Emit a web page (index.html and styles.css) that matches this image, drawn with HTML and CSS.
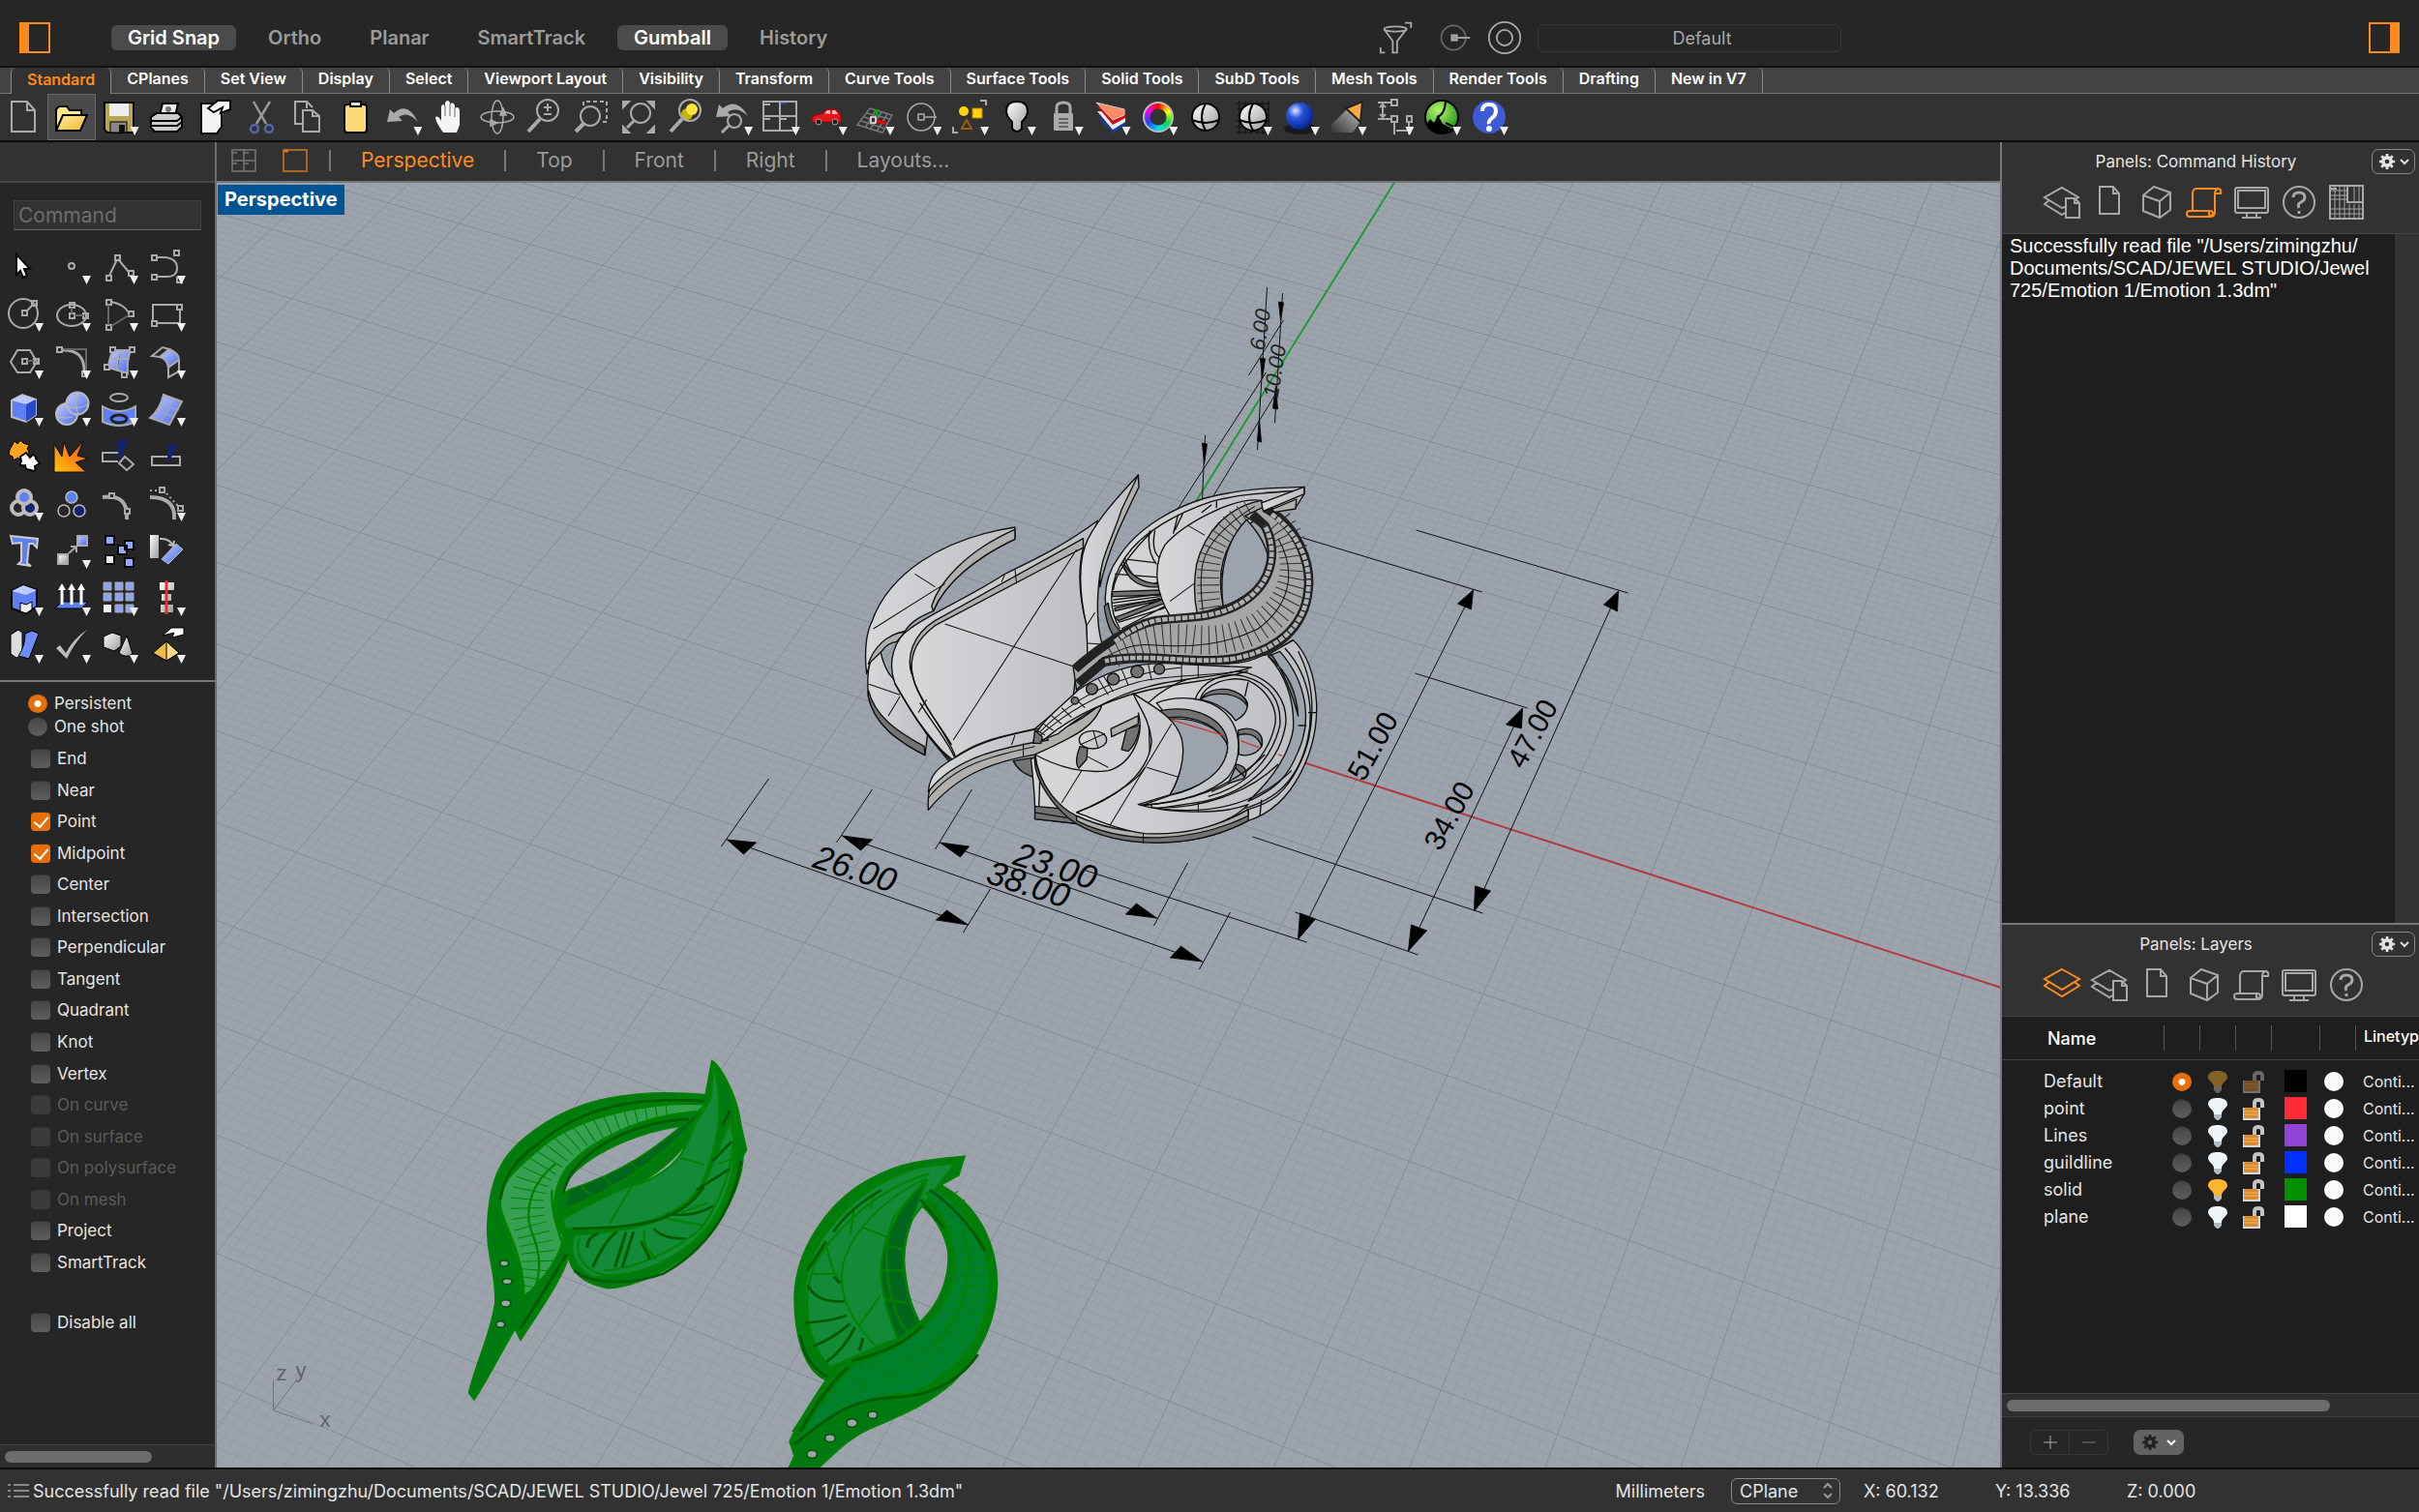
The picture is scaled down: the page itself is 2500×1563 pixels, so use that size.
FILE: index.html
```html
<!DOCTYPE html>
<html lang="en">

<head>
    <meta charset="UTF-8">
    <meta name="viewport" content="width=device-width, initial-scale=1.0">
    <title>Emotion 1.3dm</title>
    <link rel="stylesheet" href="styles.css">
</head>

<body>
    <!-- shared icons -->
    <svg class="defs" width="0" height="0">
        <defs>
            <linearGradient id="blue" x1="0" y1="0" x2="1" y2="1"><stop offset="0" stop-color="#c3d0ff"/><stop offset="1" stop-color="#4a66e8"/></linearGradient>
            <linearGradient id="grey" x1="0" y1="0" x2="1" y2="1"><stop offset="0" stop-color="#fff"/><stop offset="1" stop-color="#999"/></linearGradient>
            <linearGradient id="gold" x1="0" y1="0" x2="1" y2="1"><stop offset="0" stop-color="#fff2a8"/><stop offset="1" stop-color="#f0b429"/></linearGradient>
            <linearGradient id="fire" x1="0" y1="1" x2="1" y2="0"><stop offset="0" stop-color="#ffc20e"/><stop offset="1" stop-color="#f04e1a"/></linearGradient>
            <linearGradient id="beam" x1="1" y1="0" x2="0" y2="1"><stop offset="0" stop-color="#bbb"/><stop offset="1" stop-color="#333"/></linearGradient>
            <linearGradient id="metal" x1="0" y1="0" x2="1" y2="0"><stop offset="0" stop-color="#d6d7d9"/><stop offset="1" stop-color="#bdbec1"/></linearGradient>
            <radialGradient id="ball" cx=".35" cy=".3" r=".8"><stop offset="0" stop-color="#dfe8ff"/><stop offset=".35" stop-color="#2a54e0"/><stop offset="1" stop-color="#001a80"/></radialGradient>
            <radialGradient id="green" cx=".4" cy=".3" r=".8"><stop offset="0" stop-color="#b5f56a"/><stop offset="1" stop-color="#0f8a12"/></radialGradient>
        </defs>
        <symbol id="i-layers" viewBox="0 0 40 40"><path d="M20 4 38 14 20 25 2 14ZM7 17 2 21 20 32 38 21 33 17"/></symbol>
        <symbol id="i-layerdoc" viewBox="0 0 40 40"><path d="M23 25 20 26 2 15 20 5 37 15 34 17M7 18 2 22 20 33 23 31M24 16h9l5 5v15H24zM33 16v5h5"/></symbol>
        <symbol id="i-doc" viewBox="0 0 40 40"><path d="M10 4h14l6 7v21H10zM24 4v7h6"/></symbol>
        <symbol id="i-box" viewBox="0 0 40 40"><path d="M17 4 34 10V28L23 36 6 29V13ZM6 13 23 19 34 10M23 19V36"/></symbol>
        <symbol id="i-scroll" viewBox="0 0 40 40"><path d="M8 29V10Q9 6 12 6H35Q31 7 31 11V30Q31 35 26 35H5Q2 35 2 32T5 29H26Q29 29 29 32T25 33V30M35 6Q38 7 37 11H31M8 29V10"/></symbol>
        <symbol id="i-screen" viewBox="0 0 40 40"><path d="M5 5H35Q37 5 37 7V29Q37 31 35 31H5Q3 31 3 29V7Q3 5 5 5ZM6 8H34V26H6ZM15 31V35M25 31V35M10 36H30"/></symbol>
        <symbol id="i-ask" viewBox="0 0 40 40"><circle cx="20" cy="20" r="16"/><path stroke-width="3" d="M14 15Q14 10 20 10T26 15Q26 18 22 20T20 26M20 29V32"/></symbol>
        <symbol id="i-plane" viewBox="0 0 40 40"><path stroke-width="1" d="M8 3V37M13 3V37M18 3V37M23 22V37M28 22V37M33 22V37M3 8H20M3 13H20M3 17H20M3 27H37M3 32H37M28 3V20M33 3V20"/><path d="M3 3H37V37H3ZM21 3V20H37M3 6H10"/></symbol>
        <symbol id="i-gear" viewBox="0 0 20 20"><circle cx="10" cy="10" r="4.6" fill="none" stroke="currentColor" stroke-width="4"/><path stroke="currentColor" stroke-width="3" d="M10 1V5M10 15V19M1 10H5M15 10H19M3.6 3.6 6.4 6.4M13.6 13.6 16.4 16.4M3.6 16.4 6.4 13.6M13.6 6.4 16.4 3.6"/></symbol>
        <symbol id="i-bulb" viewBox="0 0 22 24"><path d="M11 1C5 1 1 3 1 8 2 12 7 13 7 18H15C15 13 20 12 21 8 21 3 17 1 11 1Z" fill="currentColor"/><path d="M7 18H15V21L12 24H10L7 21Z" fill="#b4bac2"/></symbol>
        <symbol id="i-lock" viewBox="0 0 24 24"><path d="M13 14V6Q13 3 17 3T21 6V11" fill="none" stroke="#c4c4c4" stroke-width="4"/><rect x="1" y="11" width="18" height="13" fill="#d8d8d8"/><rect x="2" y="11" width="15" height="11" rx="2" fill="#d98a2b"/><path d="M2 15H17M2 18H17" stroke="#f5b766"/></symbol>
        <symbol id="i-mag" viewBox="0 0 48 48"><circle cx="28" cy="17" r="11"/><path stroke-width="4" d="M20 26 8 39"/></symbol>
    </svg>

    <header class="topbar">
        <button class="side-toggle" aria-label="Toggle left sidebar"></button>
        <div class="modes">
            <button class="mode on">Grid Snap</button>
            <button class="mode">Ortho</button>
            <button class="mode">Planar</button>
            <button class="mode">SmartTrack</button>
            <button class="mode on">Gumball</button>
            <button class="mode">History</button>
        </div>
        <div class="top-right">
            <button class="top-icon" aria-label="Selection filter"><svg viewBox="0 0 40 40" class="line"><ellipse cx="19" cy="10" rx="13" ry="3"/><path d="M6 10 16 24V37H21V24L32 10M30 3H37V9M2 31V37H7"/></svg></button>
            <button class="top-icon dim" aria-label="Object snap"><svg viewBox="0 0 40 40" class="line"><circle cx="19" cy="20" r="14"/><path d="M19 20H38"/><rect x="17" y="17" width="6" height="6" fill="#999"/></svg></button>
            <button class="top-icon" aria-label="Record history"><svg viewBox="0 0 40 40" class="line"><circle cx="20" cy="20" r="18"/><circle cx="20" cy="20" r="9"/></svg></button>
            <input class="layer-field" aria-label="Current layer" value="Default">
        </div>
        <button class="side-toggle end" aria-label="Toggle right sidebar"></button>
    </header>

    <nav class="tabs">
        <button class="tab active">Standard</button>
        <button class="tab">CPlanes</button>
        <button class="tab">Set View</button>
        <button class="tab">Display</button>
        <button class="tab">Select</button>
        <button class="tab">Viewport Layout</button>
        <button class="tab">Visibility</button>
        <button class="tab">Transform</button>
        <button class="tab">Curve Tools</button>
        <button class="tab">Surface Tools</button>
        <button class="tab">Solid Tools</button>
        <button class="tab">SubD Tools</button>
        <button class="tab">Mesh Tools</button>
        <button class="tab">Render Tools</button>
        <button class="tab">Drafting</button>
        <button class="tab">New in V7</button>
    </nav>

    <div class="toolbar">
        <div class="tools">
            <button class="tool" aria-label="New"><svg viewBox="0 0 48 48" class="line"><path d="M12 8H28L36 17V39H12ZM28 8V17H36"/></svg></button>
            <button class="tool hover" aria-label="Open"><svg viewBox="0 0 48 48"><path d="M8 38V16L11 13H19L22 17H34V22" fill="#ffe98a" stroke="#000" stroke-width="2"/><path d="M8 38 15 22H40L33 38Z" fill="url(#gold)" stroke="#000" stroke-width="2"/></svg></button>
            <button class="tool drop" aria-label="Save"><svg viewBox="0 0 48 48"><path d="M9 9H39V40H12L9 37Z" fill="#b5a652" stroke="#000" stroke-width="2"/><rect x="14" y="10" width="20" height="13" fill="#eee"/><rect x="15" y="29" width="17" height="11" fill="#888" stroke="#000"/><rect x="24" y="32" width="6" height="8" fill="#111"/></svg></button>
            <button class="tool" aria-label="Print"><svg viewBox="0 0 48 48"><path d="M17 22 20 10H36L33 23" fill="#eee" stroke="#000" stroke-width="2"/><path d="M8 24 14 20H36L40 24V34L35 39H12L8 35Z" fill="#ccc" stroke="#000" stroke-width="2"/><path d="M9 28H35L40 24M9 33H35L40 29" stroke="#000" stroke-width="2" fill="none"/><circle cx="26" cy="16" r="3" fill="#777"/></svg></button>
            <button class="tool" aria-label="Properties"><svg viewBox="0 0 48 48"><path d="M11 10H32V34L27 41H11Z" fill="#f4f4f4" stroke="#000" stroke-width="2"/><path d="M18 15 28 7H41V16L31 20 33 14 24 19Z" fill="#fff" stroke="#000" stroke-width="2"/></svg></button>
            <button class="tool" aria-label="Cut"><svg viewBox="0 0 48 48" fill="none" stroke-width="2.5"><path d="M16 8 29 31M33 8 19 31" stroke="#999"/><circle cx="17" cy="36" r="4" stroke="#5564a8"/><circle cx="32" cy="36" r="4" stroke="#5564a8"/></svg></button>
            <button class="tool" aria-label="Copy"><svg viewBox="0 0 48 48" class="line"><path d="M20 31H11V8H23L29 14M19 17H29L36 23V39H19ZM29 17V23H36M23 8V15"/></svg></button>
            <button class="tool" aria-label="Paste"><svg viewBox="0 0 48 48"><rect x="13" y="11" width="23" height="29" rx="3" fill="#ffd978" stroke="#000" stroke-width="2"/><path d="M19 13V8H30V13Z" fill="#ddd" stroke="#000" stroke-width="2"/></svg></button>
            <button class="tool drop" aria-label="Undo"><svg viewBox="0 0 48 48"><path d="M8 29 11 16 15 20Q29 7 40 29Q29 17 20 24L24 28Z" fill="#aaa"/></svg></button>
            <button class="tool" aria-label="Pan"><svg viewBox="0 0 48 48"><path d="M17 40C13 34 9 28 9 24Q12 22 15 28V13Q17 9 19 13V9Q22 5 24 9V11Q27 7 29 12V15Q33 12 34 17V32L31 40Z" fill="#f4f4f4"/><path d="M19 12V23M24 10V23M29 14V24" stroke="#999" stroke-width="1.5"/></svg></button>
            <button class="tool" aria-label="Rotate view"><svg viewBox="0 0 48 48" class="line thin"><ellipse cx="24" cy="24" rx="17" ry="6"/><ellipse cx="24" cy="24" rx="6" ry="17"/><path fill="#aaa" d="M30 15 33 22H27ZM17 27 24 30 17 33Z"/></svg></button>
            <button class="tool" aria-label="Zoom dynamic"><svg viewBox="0 0 48 48" class="line"><use href="#i-mag"/><path d="M28 10V18M24 14H32M24 21H32"/></svg></button>
            <button class="tool" aria-label="Zoom window"><svg viewBox="0 0 48 48" class="line"><circle cx="23" cy="23" r="10"/><path stroke-width="4" d="M16 31 8 39"/><path stroke-dasharray="4 3" d="M16 12V8H40V29H34"/></svg></button>
            <button class="tool" aria-label="Zoom extents"><svg viewBox="0 0 48 48" class="line"><circle cx="26" cy="20" r="10"/><path stroke-width="3" d="M19 28 12 35"/><path fill="#aaa" d="M8 8H14L8 14ZM40 8V14L34 8ZM8 40V34L14 40ZM40 40H34L40 34Z"/></svg></button>
            <button class="tool" aria-label="Zoom selected"><svg viewBox="0 0 48 48" class="line"><circle cx="25" cy="21" r="6" stroke="none" fill="#c8b400"/><circle cx="30" cy="16" r="6" stroke="none" fill="#ffe33a"/><use href="#i-mag"/></svg></button>
            <button class="tool drop" aria-label="Undo view change"><svg viewBox="0 0 48 48" class="line"><path fill="#aaa" stroke="none" d="M6 24 9 11 13 15Q27 3 39 23Q27 12 18 19L22 23Z"/><circle cx="25" cy="28" r="7"/><path stroke-width="3" d="M19 33 12 40"/></svg></button>
            <button class="tool drop" aria-label="Four viewports"><svg viewBox="0 0 48 48" class="line"><path d="M7 8H41V38H7ZM24 8V38M7 23H41M7 11H14M7 26H14M24 26H31"/><path stroke="#2b3fa0" d="M25 10H32"/></svg></button>
            <button class="tool drop" aria-label="Named view"><svg viewBox="0 0 48 48"><path d="M8 29Q7 23 12 22L20 20 23 16H33L38 22V29Z" fill="#e8141c" stroke="#900"/><path d="M21 20 24 17H27V21ZM29 17H32L35 21H29Z" fill="#fbb"/><circle cx="15" cy="29" r="3" fill="#222" stroke="#999"/><circle cx="32" cy="29" r="3" fill="#222" stroke="#999"/></svg></button>
            <button class="tool drop" aria-label="Set CPlane"><svg viewBox="0 0 48 48" class="line thin"><path stroke="#777" d="M19 15 42 22 32 40 6 32ZM16 20 40 26M13 24 37 31M10 28 35 36M25 17 14 35M31 19 19 37M37 21 26 39"/><path stroke="#0a0" stroke-width="3" d="M26 16V23"/><path stroke="#e00" stroke-width="3" d="M26 28 36 31"/><path stroke="#eee" fill="#323232" d="M20 24h5v6h-5z"/></svg></button>
            <button class="tool drop" aria-label="Object snap"><svg viewBox="0 0 48 48" class="line thin"><circle cx="23" cy="24" r="14"/><rect x="20" y="21" width="6" height="6"/><path d="M26 24H39"/></svg></button>
            <button class="tool drop" aria-label="Select"><svg viewBox="0 0 48 48"><circle cx="18" cy="18" r="5" fill="#ffd60a"/><rect x="27" y="15" width="10" height="10" fill="#ffd60a" stroke="#c70"/><path d="M16 36 21 27 26 36Z" fill="none" stroke="#a05a10" stroke-width="2"/><path d="M35 7H41V12M7 34V40H12" stroke="#aaa" stroke-width="2" fill="none"/></svg></button>
            <button class="tool drop" aria-label="Hide"><svg viewBox="0 0 48 48"><path d="M24 8Q13 8 13 18 13 23 19 29V36Q24 42 29 36V29Q35 23 35 18 35 8 24 8Z" fill="url(#grey)" stroke="#000" stroke-width="2"/></svg></button>
            <button class="tool drop" aria-label="Lock"><svg viewBox="0 0 48 48"><path d="M17 21V14Q17 9 24 9T31 14V21" fill="none" stroke="#aaa" stroke-width="3"/><rect x="14" y="20" width="20" height="18" rx="1" fill="#aaa"/><path d="M19 26H29M19 30H29M19 34H29" stroke="#666" stroke-width="2"/></svg></button>
            <button class="tool drop" aria-label="Layers"><svg viewBox="0 0 48 48"><path d="M10 24 27 41 39 32V24Z" fill="#1a3a9c"/><path d="M10 18 26 37 39 29V20Z" fill="#eee"/><path d="M10 13 26 32 39 25V17Z" fill="#c11"/><path d="M9 9 38 16V22L26 27Z" fill="#ff8a65" stroke="#ccc"/></svg></button>
            <button class="tool drop" aria-label="Color"><div class="wheel"></div></button>
            <button class="tool" aria-label="Shade"><svg viewBox="0 0 48 48"><circle cx="24" cy="24" r="14" fill="url(#grey)" stroke="#000" stroke-width="2"/><path d="M24 10Q16 24 24 38M10 27Q24 33 38 27" fill="none" stroke="#000" stroke-width="2"/></svg></button>
            <button class="tool drop" aria-label="Render mesh"><svg viewBox="0 0 48 48"><path d="M7 10H41M7 16H41M7 22H41M7 28H41M7 34H41M7 40H41M10 7V42M16 7V42M22 7V42M28 7V42M34 7V42M40 7V42" stroke="#111"/><circle cx="24" cy="24" r="14" fill="url(#grey)" stroke="#000" stroke-width="2"/><path d="M24 10Q16 24 24 38M10 27Q24 33 38 27" fill="none" stroke="#000" stroke-width="2"/></svg></button>
            <button class="tool drop" aria-label="Render"><svg viewBox="0 0 48 48"><ellipse cx="25" cy="36" rx="17" ry="6" fill="#1a1a1a"/><circle cx="24" cy="23" r="14" fill="url(#ball)"/></svg></button>
            <button class="tool drop" aria-label="Spotlight"><svg viewBox="0 0 48 48"><path d="M25 15 37 30 30 40H8V32Z" fill="url(#beam)"/><path d="M23 15 40 8 38 29Z" fill="#ffa63d" stroke="#222" stroke-width="2"/></svg></button>
            <button class="tool drop" aria-label="Dimension"><svg viewBox="0 0 48 48" class="line"><path d="M7 9H20M7 26H20M12 12V23M9 14 12 11 15 14M9 21 12 24 15 21M24 32V42M39 32V42M26 38H38"/><path d="M21 6H27V12H21ZM21 23H27V29H21ZM37 23H42V29H37ZM24 29V32M39 29V32"/></svg></button>
            <button class="tool drop" aria-label="Grasshopper"><svg viewBox="0 0 48 48"><circle cx="24" cy="24" r="17" fill="url(#green)" stroke="#000" stroke-width="2"/><path d="M8 32 12 26 16 30 20 22 25 31 33 35 36 39Q20 44 10 36Z" fill="#000"/><path d="M19 24Q27 22 28 8M28 30 38 35" stroke="#000" stroke-width="2" fill="none"/></svg></button>
            <button class="tool drop" aria-label="Help"><svg viewBox="0 0 48 48"><circle cx="24" cy="24" r="17" fill="#3d5bd6"/><path d="M17 18Q17 11 24 11T31 18Q31 22 27 25T24 31" fill="none" stroke="#fff" stroke-width="4"/><circle cx="24" cy="36" r="3" fill="#fff"/></svg></button>
        </div>
    </div>

    <main class="work">
        <aside class="left">
            <div class="strip"></div>
            <input class="command" aria-label="Command" placeholder="Command">
            <div class="palette">
                <button class="tool" aria-label="Cancel"><svg viewBox="0 0 48 48"><path d="M16 12V33L20 29 23 36 27 34 24 27H30Z" fill="#fff" stroke="#000" stroke-width="2"/></svg></button>
                <button class="tool drop" aria-label="Point"><svg viewBox="0 0 48 48" class="line"><circle cx="24" cy="24" r="3"/></svg></button>
                <button class="tool drop" aria-label="Polyline"><svg viewBox="0 0 48 48" class="line"><path d="M14 34 22 17M23 17 34 30"/><path d="M20 13h5v5h-5zM11 34h5v5h-5zM34 29h5v5h-5z"/></svg></button>
                <button class="tool drop" aria-label="Curve"><svg viewBox="0 0 48 48" class="line"><path d="M14 15H22Q35 16 35 26T22 35H14"/><path d="M9 13h5v5H9zM9 33h5v5H9zM32 8h5v5h-5zM35 36h5v5h-5z"/></svg></button>
                <button class="tool drop" aria-label="Circle"><svg viewBox="0 0 48 48" class="line"><circle cx="23" cy="24" r="15"/><path d="M26 22 32 16M22 21h5v5h-5zM32 11h5v5h-5z"/></svg></button>
                <button class="tool drop" aria-label="Ellipse"><svg viewBox="0 0 48 48" class="line"><ellipse cx="24" cy="26" rx="15" ry="11"/><path d="M22 24h5v5h-5zM22 13h5v5h-5zM36 24h5v5h-5z"/><path class="faint" d="M24 18V24M27 26H36"/></svg></button>
                <button class="tool drop" aria-label="Arc"><svg viewBox="0 0 48 48" class="line"><path d="M16 12Q28 14 34 23M11 10h5v5h-5zM11 36h5v5h-5zM34 22h5v5h-5z"/><path class="faint" d="M13 15V36M16 37 34 26"/></svg></button>
                <button class="tool drop" aria-label="Rectangle"><svg viewBox="0 0 48 48" class="line"><path d="M10 31V15H36M38 20V34H14M9 32h5v5H9zM35 15h5v5h-5z"/></svg></button>
                <button class="tool drop" aria-label="Polygon"><svg viewBox="0 0 48 48" class="line"><path d="M17 13H30L37 25 30 36H17L10 25ZM22 22h5v5h-5zM34 22h5v5h-5z"/><path class="faint" d="M27 24H34"/></svg></button>
                <button class="tool drop" aria-label="Fillet"><svg viewBox="0 0 48 48" class="line"><path stroke-width="3" d="M14 13Q38 12 37 36"/><path d="M9 10h5v5H9zM35 35h5v5h-5z"/><path class="faint" d="M16 12H39V35"/></svg></button>
                <button class="tool drop" aria-label="Surface from points"><svg viewBox="0 0 48 48" class="line"><path fill="url(#blue)" d="M18 13H36Q32 24 33 37L13 31Q14 20 18 13ZM26 13Q21 24 22 34M16 22H34"/><path fill="#262626" d="M15 10h5v5h-5zM35 10h5v5h-5zM9 28h5v5H9zM27 36h5v5h-5z"/></svg></button>
                <button class="tool drop" aria-label="Loft"><svg viewBox="0 0 48 48" class="line"><path d="M9 19 20 10 27 12 17 20Z"/><path fill="url(#blue)" d="M27 12Q37 16 37 23L26 31Q25 22 17 20Z"/><path d="M37 23V35L26 41V31"/></svg></button>
                <button class="tool drop" aria-label="Box"><svg viewBox="0 0 48 48"><path d="M11 16 22 10 36 15V31L26 38 11 33Z" fill="#5f80f5" stroke="#bbb" stroke-width="2"/><path d="M11 16 22 10 36 15 26 20Z" fill="#bccaff"/><path d="M26 20 36 15V31L26 38Z" fill="#2b48c8"/></svg></button>
                <button class="tool drop" aria-label="Spheres"><svg viewBox="0 0 48 48" stroke="#bbb" stroke-width="2"><circle cx="19" cy="30" r="11" fill="url(#blue)"/><circle cx="30" cy="19" r="11.5" fill="url(#blue)"/><path fill="none" stroke-width="1" d="M19 22Q30 26 41 20M30 8Q26 20 31 30M10 33Q18 35 25 33"/></svg></button>
                <button class="tool drop" aria-label="Project curve"><svg viewBox="0 0 48 48" class="line"><ellipse cx="24" cy="13" rx="9" ry="4"/><path fill="#5f80f5" d="M7 22Q24 32 41 22V38Q24 46 7 38Z"/><ellipse cx="24" cy="35" rx="8" ry="4" stroke="#222" stroke-width="3"/></svg></button>
                <button class="tool drop" aria-label="Mesh"><svg viewBox="0 0 48 48" class="line"><path fill="url(#blue)" d="M21 10 40 17Q34 28 27 41L7 34Q17 26 21 10Z"/><path stroke-width="1" d="M30 14Q27 28 17 38M17 20 37 26M13 27 33 33"/></svg></button>
                <button class="tool" aria-label="Join"><svg viewBox="0 0 48 48" stroke="#000"><path d="M9 18 14 9 17 12Q20 6 23 11L29 13 27 17Q31 22 26 22L23 30 17 26Q13 31 12 25L8 23Z" fill="#ffa51e"/><path stroke-width="2" d="M20 25 26 21 30 26Q35 20 36 27L40 32 35 35Q37 42 31 39L26 38 25 34Q17 35 21 30Z" fill="#fff"/></svg></button>
                <button class="tool" aria-label="Explode"><svg viewBox="0 0 48 48"><path d="M6 41V12L14 25 16 10 22 25 36 9 30 24 41 27 28 31 39 41Z" fill="url(#fire)" stroke="#111"/></svg></button>
                <button class="tool" aria-label="Trim"><svg viewBox="0 0 48 48" class="line"><path d="M23 30H7V21H23M24 32 30 25 39 33 32 39Z"/><path fill="#14246e" stroke="none" d="M23 8H34L23 31Z"/></svg></button>
                <button class="tool" aria-label="Split"><svg viewBox="0 0 48 48" class="line"><path d="M9 25H38V34H9Z"/><path fill="#14246e" stroke="none" d="M25 12H36L25 34Z"/></svg></button>
                <button class="tool drop" aria-label="Group"><svg viewBox="0 0 48 48" stroke="#bbb" stroke-width="4"><circle cx="18" cy="29" r="7" fill="#262626"/><circle cx="30" cy="29" r="7" fill="#14246e"/><circle cx="24" cy="18" r="7" fill="#5f80f5"/></svg></button>
                <button class="tool" aria-label="Ungroup"><svg viewBox="0 0 48 48" stroke="#bbb" stroke-width="1.5"><circle cx="16" cy="32" r="6" fill="#262626"/><circle cx="32" cy="32" r="6" fill="#14246e"/><circle cx="24" cy="18" r="6" fill="#5f80f5"/></svg></button>
                <button class="tool" aria-label="Edit points"><svg viewBox="0 0 48 48" class="line"><path stroke-width="4" d="M7 18Q34 14 32 41"/><path fill="#262626" d="M14 14h5v5h-5zM30 30h5v5h-5z"/></svg></button>
                <button class="tool drop" aria-label="Control points"><svg viewBox="0 0 48 48" class="line"><path stroke-width="4" d="M7 18Q34 18 32 41"/><path stroke-dasharray="2 3" d="M7 11H18M24 14 36 27"/><path fill="#262626" d="M17 8h5v5h-5zM36 27h5v5h-5z"/></svg></button>
                <button class="tool" aria-label="Text object"><svg viewBox="0 0 48 48"><path d="M10 9 38 12 37 21 33 17H29L27 37 31 40 18 38 21 35V16L12 17Z" fill="#5f80f5" stroke="#ccc" stroke-width="2"/></svg></button>
                <button class="tool drop" aria-label="Move"><svg viewBox="0 0 48 48" class="line"><path fill="url(#grey)" d="M10 28h10v10H10z"/><path fill="url(#blue)" d="M30 9h10v10H30z"/><path d="M21 27 29 20M23 20H29V26"/></svg></button>
                <button class="tool" aria-label="Copy object"><svg viewBox="0 0 48 48" stroke="#000" stroke-width="2"><path fill="#90a8ff" d="M10 9h9v9h-9zM30 14h9v9h-9zM23 19h9v9h-9zM30 32h9v9h-9z"/><path fill="#eee" d="M10 29h9v9h-9z"/></svg></button>
                <button class="tool" aria-label="Rotate"><svg viewBox="0 0 48 48"><path d="M7 8H16V32H7Z" fill="url(#grey)"/><path d="M19 33 34 17 41 23 26 38Z" fill="url(#blue)" stroke="#bbb"/><path d="M17 12Q27 11 31 19M26 18 31 19 32 14" fill="none" stroke="#bbb" stroke-width="2"/></svg></button>
                <button class="tool drop" aria-label="Boolean"><svg viewBox="0 0 48 48"><path d="M11 17 23 11 37 16V33L26 40 11 35Z" fill="#5f80f5" stroke="#000" stroke-width="2"/><path d="M11 17 23 11 37 16 26 21Z" fill="#bccaff"/><path d="M20 29 26 31 32 28V36L26 40 20 38Z" fill="#eee" stroke="#000"/></svg></button>
                <button class="tool drop" aria-label="Extrude"><svg viewBox="0 0 48 48"><path d="M7 35 14 28H41L34 35Z" fill="#5f80f5" stroke="#000"/><path d="M14 31V14M24 31V14M34 31V14" stroke="#fff" stroke-width="3"/><path d="M10 16 14 9 18 16ZM20 16 24 9 28 16ZM30 16 34 9 38 16Z" fill="#fff"/></svg></button>
                <button class="tool drop" aria-label="Array"><svg viewBox="0 0 48 48"><path d="M8 8h8v8H8zM20 8h8v8h-8zM31 8h8v8h-8zM8 19h8v8H8zM20 19h8v8h-8zM31 19h8v8h-8zM20 31h8v8h-8zM31 31h8v8h-8z" fill="#8da2f0" stroke="#aaa"/><path d="M8 31h8v8H8z" fill="#eee"/></svg></button>
                <button class="tool drop" aria-label="Align"><svg viewBox="0 0 48 48"><path d="M17 8H32V16H17ZM19 20H29V27H19ZM18 31H31V39H18Z" fill="url(#grey)"/><path d="M24 6V41" stroke="#d33" stroke-width="3"/></svg></button>
                <button class="tool drop" aria-label="Analyze"><svg viewBox="0 0 48 48" stroke="#000"><path d="M10 13 18 8 22 11V34L16 37 10 33Z" fill="#ddd"/><path d="M25 12 32 9 39 12 29 38 18 35Q25 25 25 12Z" fill="#6f8cf8"/></svg></button>
                <button class="tool drop" aria-label="Check"><svg viewBox="0 0 48 48"><path d="M8 27 12 24 18 32Q26 17 40 8Q27 21 19 38Z" fill="#bbb"/></svg></button>
                <button class="tool drop" aria-label="Primitives"><svg viewBox="0 0 48 48" stroke="#000"><path d="M8 15 17 11 26 14V25L19 30 8 26Z" fill="url(#grey)"/><path d="M32 14 38 33Q31 38 24 32Z" fill="url(#grey)"/></svg></button>
                <button class="tool drop" aria-label="Drape"><svg viewBox="0 0 48 48" stroke="#000"><path d="M24 20 37 32 24 40 10 32Z" fill="#e8bb4d"/><path d="M24 20 24 40 37 32Z" fill="#f8d985"/><path d="M20 14 29 6H42V13L30 16 32 11Z" fill="#fff"/></svg></button>
            </div>

            <form class="osnap">
                <div class="persist">
                    <label><input type="radio" name="osnap" checked>Persistent</label>
                    <label><input type="radio" name="osnap">One shot</label>
                </div>
                <div class="snaps">
                    <label><input type="checkbox">End</label>
                    <label><input type="checkbox">Near</label>
                    <label><input type="checkbox" checked>Point</label>
                    <label><input type="checkbox" checked>Midpoint</label>
                    <label><input type="checkbox">Center</label>
                    <label><input type="checkbox">Intersection</label>
                    <label><input type="checkbox">Perpendicular</label>
                    <label><input type="checkbox">Tangent</label>
                    <label><input type="checkbox">Quadrant</label>
                    <label><input type="checkbox">Knot</label>
                    <label><input type="checkbox">Vertex</label>
                    <label class="off"><input type="checkbox" disabled>On curve</label>
                    <label class="off"><input type="checkbox" disabled>On surface</label>
                    <label class="off"><input type="checkbox" disabled>On polysurface</label>
                    <label class="off"><input type="checkbox" disabled>On mesh</label>
                    <label><input type="checkbox">Project</label>
                    <label><input type="checkbox">SmartTrack</label>
                </div>
                <label class="disable"><input type="checkbox">Disable all</label>
            </form>
            <div class="scroll"><div class="thumb"></div></div>
        </aside>

        <section class="center">
            <nav class="views">
                <button class="view-icon" aria-label="Four views"><svg viewBox="0 0 26 24" class="line thin"><path d="M1 1H25V23H1ZM13 1V23M1 12H25M1 4H6M13 4H18M1 15H6M13 15H18"/></svg></button>
                <button class="view-icon single" aria-label="Single view"><svg viewBox="0 0 26 24" class="line thin"><path d="M1 1H25V23H1Z"/><path stroke-width="3" d="M1 2H6"/></svg></button>
                <button class="view active">Perspective</button>
                <button class="view">Top</button>
                <button class="view">Front</button>
                <button class="view">Right</button>
                <button class="view">Layouts...</button>
            </nav>
            <div class="stage">
                <svg class="scene" viewBox="224 189 1844 1328" preserveAspectRatio="xMidYMid slice">
                    <path id="minor" class="minor"/>
                    <path id="major" class="major"/>
                    <path id="axisX" class="axis-x"/>
                    <path id="axisY" class="axis-y"/>

                    <!-- dimensions -->
                    <g class="dims">
                        <path d="M795 805 746 875M752 868 1001 956M1024 919 996 964M902 816 865 871M871 864 1243 994M1272 943 1240 1002M1005 816 967 878M972 871 1196 949M1228 892 1193 957M1120 899 1351 974M1339 943 1466 987M1342 971 1523 610M1347 556 1532 612M1524 942 1673 611M1464 548 1683 613M1295 865 1533 944M1456 983 1574 732M1463 696 1579 732M1310 297 1300 465M1326 303 1318 437M1246 450 1243 516M1327 331 1291 388M1309 385 1215 530M1322 402 1250 520"/>
                        <path class="tip" d="M752 868 782 871 769 883ZM1001 956 979 941 968 951ZM871 864 902 868 890 879ZM1243 994 1221 978 1210 990ZM972 871 1002 875 993 886ZM1196 949 1175 934 1164 945ZM1342 971 1344 944 1360 950ZM1523 610 1507 624 1521 630ZM1673 611 1658 625 1672 632ZM1524 942 1525 916 1541 921ZM1574 732 1557 749 1573 753ZM1456 983 1459 956 1475 962ZM1324 331 1322 312 1327 313ZM1305 392 1303 370 1308 371ZM1302 434 1300 456 1304 457ZM1319 399 1316 422 1321 423ZM1245 480 1243 458 1248 459Z"/>
                        <text class="slant" transform="translate(839 896) rotate(18)">26.00</text>
                        <text class="slant" transform="translate(1046 893) rotate(18)">23.00</text>
                        <text class="slant" transform="translate(1018 912) rotate(18)">38.00</text>
                        <text transform="translate(1410 809) rotate(-61)">51.00</text>
                        <text transform="translate(1489 881) rotate(-61)">34.00</text>
                        <text transform="translate(1575 796) rotate(-61)">47.00</text>
                        <text class="small" transform="translate(1307 363) rotate(-81)">6.00</text>
                        <text class="small" transform="translate(1321 412) rotate(-81)">10.00</text>
                    </g>

                    <!-- pendant -->
                    <g class="metal" transform="translate(860 460) scale(.3444 .3333)">
                        <path d="M105 710C95 620 110 570 120 550C170 400 330 290 550 255L550 292C430 350 340 430 305 515C270 530 240 545 220 577C170 585 130 620 105 710Z"/>
                        <path class="side" d="M550 262L550 292C430 350 340 430 305 515L300 500C320 430 400 330 550 262Z"/>
                        <path d="M145 632C110 660 105 700 110 780C125 860 190 915 280 962L290 880C250 830 210 780 185 725C160 700 150 660 145 632Z"/>
                        <path class="dark" d="M110 760C130 840 190 885 278 935L280 962C190 915 125 860 110 780Z"/>
                        <path class="side" d="M110 680C125 630 165 585 220 580L195 610C175 612 160 625 150 640Z"/>
                        <path class="dark" d="M280 890 300 900 372 968 355 985Z"/>
                        <path d="M362 975C290 920 240 830 190 740C165 670 190 600 235 570C300 520 400 480 520 400C620 350 700 310 798 235L770 330 735 690 610 880Z"/>
                        <path d="M372 968C350 900 280 820 250 740C225 660 240 600 310 555L755 318C735 400 745 480 765 560L770 655L735 690L725 780L610 880C520 900 430 920 372 968Z"/>
                        <path class="side" d="M755 290L310 545C240 590 225 660 240 710C235 640 260 600 310 560L755 318Z"/>
                        <path d="M920 93C850 170 800 230 770 290C735 360 745 470 765 560L768 655L812 620C795 560 795 480 805 400C830 320 880 220 920 130Z"/>
                        <path class="side" d="M920 93L922 130C880 220 830 320 805 440C800 360 840 300 870 200Z"/>
                        <path class="line" d="M190 740C240 830 270 880 362 985M265 800C300 860 350 920 368 968M240 700C250 780 320 860 360 930"/>
                        <path class="thin" d="M340 555 735 690M735 325 365 915M250 400 310 440M340 430 125 570M112 742 205 775M205 780 170 840M285 790 260 830M765 560 790 520M768 615 812 618M520 400 510 425M550 385 555 430"/>

                        <!-- lower disc -->
                        <path class="dark" d="M545 980C560 1010 580 1020 605 1030L600 970Z"/>
                        <path d="M598 975C605 1040 612 1100 610 1160L735 1175 720 1100 620 960Z"/>
                        <path class="dark" d="M610 1120 690 1128 735 1150 745 1175 610 1160Z"/>
                        <path class="line" d="M610 1140 740 1162M625 1030 622 1120"/>
                        <path d="M610 955C620 1060 690 1130 735 1165C860 1250 1080 1260 1250 1165C1390 1120 1460 940 1455 800C1450 720 1430 650 1385 605L1310 650 1000 700 800 800Z"/>
                        <path class="dark" d="M610 960C620 1060 690 1130 735 1150C880 1220 1100 1225 1250 1130L1250 1165C1080 1260 860 1250 735 1175C680 1140 600 1040 610 960Z"/>
                        <path class="side" d="M735 1150C880 1220 1100 1225 1250 1130L1250 1150C1080 1235 880 1240 735 1165Z"/>
                        <path class="gap" d="M1345 640C1430 740 1440 860 1400 950C1370 1030 1330 1070 1250 1105C1330 1030 1375 950 1385 880C1390 790 1360 710 1310 655Z"/>
                        <path class="dark" d="M1310 655C1375 710 1395 770 1400 840C1385 780 1355 700 1320 650Z"/>
                        <path class="line" d="M1360 630C1440 720 1455 850 1415 960C1380 1060 1310 1120 1180 1140M1400 640C1460 760 1450 900 1400 1000C1360 1080 1320 1110 1250 1130M1385 605 1350 625M1400 870H1425M1430 830H1455M1290 1100 1285 1150"/>
                        <path d="M950 800C1020 730 1140 690 1240 705C1330 730 1370 800 1362 870C1340 1000 1230 1090 1090 1110L960 1130Z"/>
                        <path class="line" d="M1090 790C1110 730 1180 700 1240 718C1320 740 1350 800 1345 870C1320 980 1240 1060 1130 1090M1105 790C1120 740 1190 715 1250 730C1310 760 1340 820 1330 870C1310 960 1250 1030 1140 1075M1250 735 1240 780"/>
                        <path class="gap" d="M1110 790C1120 760 1230 750 1248 800C1250 830 1230 845 1212 855C1190 820 1160 800 1110 790ZM1220 890C1270 870 1300 900 1290 935C1270 965 1240 965 1222 960ZM1212 1000C1240 1000 1250 1020 1235 1035L1190 1050Z"/>
                        <path class="dark" d="M1110 785C1140 740 1240 750 1248 810C1220 765 1150 765 1110 785ZM1220 885C1260 870 1300 890 1290 935C1280 900 1250 890 1220 900ZM1212 990C1240 995 1250 1010 1240 1030L1215 1005Z"/>
                        <path d="M975 800C1040 775 1130 780 1180 830C1230 880 1235 970 1190 1030C1130 1090 1020 1110 930 1118L1020 1085C1100 1070 1180 1010 1188 940C1185 880 1100 835 1010 845Z"/>
                        <path class="gap" d="M1005 850C1100 840 1188 890 1188 940C1180 1020 1100 1065 1015 1085C1055 1020 1070 930 1005 850Z"/>
                        <path class="dark" d="M985 825C1080 800 1190 850 1188 930C1150 850 1050 835 1000 848Z"/>
                        <path class="red" d="M1012 850 1180 902M1228 918 1282 938M1340 960 1352 964"/>
                        <path class="line" d="M920 1118C1080 1110 1200 1060 1300 960M960 1125C1110 1130 1250 1080 1340 990M1000 1130C1150 1145 1280 1110 1380 1010"/>
                        <path class="thin" d="M750 1010 690 1110M1100 1110V1140M935 1205V1235"/>
                        <path d="M905 770C960 810 1030 840 1050 910C1065 970 1040 1040 1015 1085L920 1115C1000 1140 1160 1150 1250 1115C1180 1190 1040 1210 940 1205C860 1195 790 1160 735 1140C840 1100 950 1030 960 920C955 850 920 810 905 770Z"/>
                        <path class="line" d="M610 960C680 1000 760 1020 830 1010C900 990 940 900 920 830M735 1140C830 1100 920 1040 940 1000"/>
                        <ellipse cx="784" cy="914" rx="41" ry="28"/>
                        <path class="thin" d="M745 930 820 895M785 887 800 940"/>
                        <path class="dark" d="M745 935C735 960 730 990 742 1002L765 975 768 940ZM870 945 885 880 925 870C920 910 905 935 890 950Z"/>
                        <path class="side" d="M838 880 920 840V865L840 905Z"/>
                        <path class="thin" d="M1020 865 835 1180M945 1000 1040 1030M765 965 830 1000"/>
                        <path class="side" d="M290 1132C285 1040 310 1020 370 990C450 940 570 930 650 900C740 860 780 830 815 795C795 870 740 900 610 960C480 985 380 1020 290 1132Z"/>
                        <path d="M290 1075C295 1020 320 1000 370 970C450 915 530 900 620 880L650 915C500 940 370 970 290 1075Z"/>
                        <path class="thin" d="M290 1095C370 990 480 965 610 935M550 900 540 930M575 925V965"/>

                        <!-- upper ring -->
                        <path d="M850 590C810 520 810 420 860 350C920 250 1040 190 1120 165C1230 135 1330 132 1418 130L1418 152L1390 198L1300 200L1240 260L1100 540L870 580Z"/>
                        <path class="line" d="M865 570C825 500 835 420 880 350C930 270 1040 210 1140 175C1230 150 1320 148 1418 140M845 450C850 400 900 330 960 270M1140 185 1110 210M1155 175V195M1055 210 1030 265M1040 215 1025 275M955 265C945 320 960 350 975 370M970 265C960 320 970 340 985 350M880 350C890 400 930 440 980 440M870 370C900 430 940 450 980 425M890 355 970 365"/>
                        <path class="dark" d="M842 455 985 450V465L842 470ZM850 535 990 480 1000 490 860 545ZM850 515 985 482 985 476 850 505ZM818 500C825 550 835 580 850 595L870 580C845 560 835 530 830 490Z"/>
                        <path class="line" d="M842 490 985 470M845 500 985 478M870 570 1000 500M860 550 1000 505M850 400 975 410M845 480 990 462"/>
                        <path class="dark" d="M875 360C890 400 930 430 980 430V440C930 445 880 420 875 360Z"/>
                        <path d="M1290 172C1200 160 1050 250 1000 310C960 380 975 460 1015 530L1110 530C1080 440 1100 350 1140 270C1180 210 1250 190 1290 172Z"/>
                        <path class="shade" d="M1290 172C1190 190 1120 270 1095 370C1085 430 1088 480 1097 525L1175 500C1155 400 1170 320 1245 235L1295 195Z"/>
                        <path class="mesh narrow" d="M1255 205C1170 250 1130 330 1130 400C1128 450 1132 480 1138 515"/>
                        <path class="thin" d="M1070 250 1120 280M1015 485 1090 428M1270 190C1160 260 1110 330 1110 400C1105 450 1110 480 1115 520"/>
                        <path class="shade" d="M1300 190C1400 240 1450 350 1440 450C1430 580 1340 640 1250 670C1120 700 950 650 800 690L735 760 725 690C800 620 900 560 970 540C1060 520 1160 540 1240 480C1310 430 1340 350 1310 290C1290 240 1250 230 1240 220Z"/>
                        <path class="mesh" d="M1340 240C1410 320 1400 430 1350 500C1290 580 1200 610 1100 605C1000 590 900 610 830 655"/>
                        <path class="gap" d="M1245 232C1190 290 1160 380 1175 500C1260 470 1315 400 1312 360C1305 310 1280 270 1245 232Z"/>
                        <path class="rim" d="M730 695C800 630 900 560 970 545C1060 530 1160 545 1250 475C1320 420 1340 330 1300 250L1262 215"/>
                        <path class="ticks" d="M850 610C900 570 940 552 970 545C1060 530 1160 545 1250 475C1320 420 1340 330 1300 250"/>
                        <path class="rim" d="M1300 195C1400 250 1440 370 1430 450C1420 570 1330 630 1240 655C1120 690 950 640 820 670L740 740"/>
                        <path class="ticks" d="M1320 215C1400 270 1440 370 1430 450C1420 570 1330 630 1240 655C1120 690 950 640 820 670"/>
                        <path class="thin" d="M1340 290C1400 400 1370 500 1280 570C1180 620 1080 630 960 620C900 615 850 640 800 670"/>
                        <path d="M605 925C610 870 680 820 740 760C850 680 960 670 1050 680L1260 690C1180 720 1050 720 950 750C830 780 720 860 680 895Z"/>
                        <path class="thin" d="M610 915C700 830 800 770 920 735C1020 710 1120 720 1230 700M640 900 615 885M665 885 635 865M690 865 660 840M720 845 690 815M760 815 725 780M830 775 800 725M845 765 815 715M1050 735V680M1100 720V680M890 745 870 695M960 730 950 680M625 890C720 790 850 710 1050 690"/>
                        <path class="line" d="M630 920C720 840 850 775 1000 750C1100 730 1180 725 1250 700"/>
                        <g class="dark"><circle cx="730" cy="793" r="11"/><circle cx="781" cy="757" r="17"/><circle cx="845" cy="726" r="18"/><circle cx="917" cy="703" r="19"/><circle cx="983" cy="695" r="16"/></g>
                        <path class="dark" d="M605 925 610 885 632 905 628 925Z"/>
                        <path d="M1290 180 1418 130V152L1295 205Z"/>
                        <path class="side" d="M1320 200 1395 168 1392 198 1330 208Z"/>
                    </g>

                    <!-- ring parts on the solid layer -->
                    <g class="solid" transform="translate(460 1080) scale(.3827 .3333)">
                        <path class="deep" fill-rule="evenodd" d="M722 50C740 60 790 150 800 250L815 325 806 345C800 470 720 600 640 665C560 730 480 755 440 755C370 740 340 700 335 655C320 720 260 820 205 915L190 880C150 960 110 1050 80 1100L66 1080C80 1000 125 900 137 800C140 700 110 650 117 540C125 400 160 330 250 260C360 170 500 135 705 155ZM640 252C470 280 320 390 318 460C480 400 580 340 640 252ZM655 300C620 360 560 410 510 440C580 420 640 360 655 300Z"/>
                        <path class="pale" d="M700 185C560 175 370 220 270 310C190 390 150 420 150 500C160 560 215 650 215 780C270 730 320 640 320 590C280 540 290 450 330 380C420 280 540 215 700 205Z"/>
                        <path class="mesh" d="M600 200C480 210 350 250 275 360C215 430 215 520 235 570C260 650 260 700 240 770"/>
                        <path class="edge" d="M300 370C230 430 215 520 235 580C260 650 260 700 245 750"/>
                        <path class="edge" d="M700 165C520 160 340 200 240 300C160 370 140 440 150 520C165 580 215 650 205 850M670 225C500 240 370 300 315 410C290 470 300 540 325 590M330 600 330 650C310 730 260 810 205 890M700 178C520 170 340 220 250 320M130 500C120 580 160 640 185 660M290 450C285 520 310 580 315 610M125 630 175 620M135 660 185 650"/>
                        <path class="shadow" d="M335 450C470 400 570 330 700 190L660 265C560 380 450 450 320 520Z"/>
                        <path class="edge" d="M325 510C440 460 560 380 690 220M370 440 400 470M430 410 455 440M500 365 530 390"/>
                        <path d="M725 60C755 170 745 300 690 440C630 540 500 580 325 570L320 540C400 490 480 440 530 430C630 380 650 330 670 260L720 165Z"/>
                        <path d="M400 720C350 690 335 640 350 590C500 580 620 560 700 440L770 240C800 350 770 480 700 580C630 670 520 720 400 720Z"/>
                        <path class="edge" d="M735 80C810 180 800 360 760 480C700 620 560 720 430 715C370 700 350 640 365 600M780 200C790 350 760 450 700 560C630 640 500 700 430 700M635 350 700 372M505 440 445 555M540 575C530 620 560 650 570 665M640 520 710 490M740 370 785 350M600 540 700 560"/>
                        <path class="black" d="M775 300 725 360M770 385 680 450M770 205 750 250M725 500C680 530 640 530 600 525M650 600C610 605 580 590 565 570M555 665 530 610M400 690C420 640 440 600 465 580M385 630C385 600 400 590 415 585M480 690 510 580M350 700C400 750 520 740 590 710C700 640 780 520 800 360M460 690 490 580M150 480C160 400 200 350 250 310C370 190 520 160 700 175M205 880 330 650M320 460C350 330 500 240 660 230M345 570C520 570 640 550 700 440"/>
                        <g class="hole"><ellipse cx="161" cy="678" rx="12" ry="9"/><ellipse cx="169" cy="734" rx="13" ry="9"/><ellipse cx="165" cy="802" rx="14" ry="11"/><ellipse cx="151" cy="867" rx="12" ry="10"/></g>

                        <path class="deep" fill-rule="evenodd" d="M1404 346 1388 405 1340 435C1430 490 1490 600 1492 740C1490 850 1450 960 1370 1050C1300 1120 1230 1150 1150 1190C1090 1220 1060 1260 1010 1312L930 1312 945 1275 932 1230C960 1160 1000 1090 1030 1040C970 1010 945 900 945 780C950 620 1050 470 1160 410C1240 360 1320 355 1404 346ZM1283 495C1250 560 1235 640 1243 700C1250 780 1265 820 1283 862C1340 800 1365 720 1360 640C1350 580 1320 530 1283 495Z"/>
                        <path d="M1380 365C1230 370 1080 470 1000 640C950 770 970 900 1040 1000L1180 930 1250 560Z"/>
                        <path d="M1300 415C1180 480 1080 600 1072 710C1070 800 1110 870 1165 935L1230 910C1170 800 1170 650 1215 530Z"/>
                        <path class="shadow" d="M1303 418C1220 510 1180 600 1178 700C1180 780 1200 850 1225 915L1283 862C1240 780 1230 650 1250 580Z"/>
                        <path class="shade" d="M1300 460C1380 560 1390 680 1360 780C1300 900 1200 960 1110 990C1050 1050 1000 1140 955 1230C1080 1110 1180 1080 1260 1080C1380 1020 1460 920 1470 760C1480 640 1410 500 1330 450Z"/>
                        <path class="mesh" d="M1350 480C1440 600 1440 760 1390 880C1330 980 1200 1020 1110 1040L1040 1120"/>
                        <path class="edge" d="M1330 440C1430 500 1490 640 1478 770C1460 930 1370 1060 1250 1090C1100 1090 1020 1170 940 1250M1290 480C1360 560 1385 640 1370 740C1340 860 1230 950 1100 980C1040 1020 990 1120 940 1200M1380 370C1220 370 1090 460 1020 580C950 700 950 850 1000 960M1310 400C1180 440 1060 560 1000 680C970 760 970 860 1010 960M1125 565 1200 598M1175 780 1120 870M1160 460 1150 510M1105 510 1095 590M1030 620C1040 680 1060 730 1072 740M1200 580C1180 700 1210 840 1250 890M990 710H1065M1190 620 1235 635M1180 700H1240M1190 790 1250 800M1400 570C1440 700 1400 850 1320 930"/>
                        <path class="black" d="M980 745C1000 790 1040 800 1080 795M972 862C1020 860 1060 850 1085 840M995 935C1030 920 1060 900 1095 865M1030 985C1060 960 1090 920 1108 875M1120 950 1130 910M1310 450C1400 520 1450 620 1460 640M1050 720 1068 740M980 700 1030 610M1050 580C1080 530 1120 490 1180 450M945 1240C1080 1110 1120 1100 1250 1090C1330 1080 1400 1030 1440 960M1100 980C1200 950 1250 920 1290 870M960 1200C1000 1120 1040 1050 1090 1000M1285 480 1350 570M960 900C970 970 1000 1010 1035 1030"/>
                        <g class="hole"><ellipse cx="1156" cy="1148" rx="13" ry="11"/><ellipse cx="1100" cy="1173" rx="15" ry="13"/><ellipse cx="1041" cy="1220" rx="14" ry="12"/><ellipse cx="992" cy="1270" rx="14" ry="12"/></g>
                    </g>

                    <g class="gizmo">
                        <path d="M283 1427V1458L308 1425M283 1458 324 1472"/>
                        <text x="286" y="1427">z</text>
                        <text x="306" y="1424">y</text>
                        <text x="331" y="1475">x</text>
                    </g>
                </svg>
                <div class="tag">Perspective</div>
            </div>
        </section>

        <aside class="right">
            <section class="panel history">
                <div class="panel-head">
                    <h2>Panels: Command History</h2>
                    <button class="gear" aria-label="Panel options"><svg class="cog"><use href="#i-gear"/></svg><svg class="chev" viewBox="0 0 10 8"><path d="M1 2 5 6 9 2"/></svg></button>
                </div>
                <div class="panel-tabs">
                    <button aria-label="Layer states"><svg><use href="#i-layerdoc"/></svg></button>
                    <button aria-label="Notes"><svg><use href="#i-doc"/></svg></button>
                    <button aria-label="Properties"><svg><use href="#i-box"/></svg></button>
                    <button class="active" aria-label="Command history"><svg><use href="#i-scroll"/></svg></button>
                    <button aria-label="Display"><svg><use href="#i-screen"/></svg></button>
                    <button aria-label="Help"><svg><use href="#i-ask"/></svg></button>
                    <button aria-label="Construction planes"><svg><use href="#i-plane"/></svg></button>
                </div>
                <div class="log">
                    <p>Successfully read file "/Users/zimingzhu/<wbr>Documents/SCAD/JEWEL STUDIO/Jewel 725/Emotion 1/Emotion 1.3dm"</p>
                </div>
            </section>

            <section class="panel layers">
                <div class="panel-head">
                    <h2>Panels: Layers</h2>
                    <button class="gear" aria-label="Panel options"><svg class="cog"><use href="#i-gear"/></svg><svg class="chev" viewBox="0 0 10 8"><path d="M1 2 5 6 9 2"/></svg></button>
                </div>
                <div class="panel-tabs">
                    <button class="active" aria-label="Layers"><svg><use href="#i-layers"/></svg></button>
                    <button aria-label="Layer states"><svg><use href="#i-layerdoc"/></svg></button>
                    <button aria-label="Notes"><svg><use href="#i-doc"/></svg></button>
                    <button aria-label="Properties"><svg><use href="#i-box"/></svg></button>
                    <button aria-label="Command history"><svg><use href="#i-scroll"/></svg></button>
                    <button aria-label="Display"><svg><use href="#i-screen"/></svg></button>
                    <button aria-label="Help"><svg><use href="#i-ask"/></svg></button>
                </div>
                <div class="layer-list">
                    <table>
                        <colgroup><col class="c-name"><col class="c-s"><col class="c-s"><col class="c-s"><col class="c-m"><col class="c-s"><col></colgroup>
                        <thead>
                            <tr><th>Name</th><th></th><th></th><th></th><th></th><th></th><th>Linetype</th></tr>
                        </thead>
                        <tbody>
                            <tr class="current"><td>Default</td><td><input type="radio" name="layer" aria-label="Default" checked></td><td><svg class="bulb lit"><use href="#i-bulb"/></svg></td><td><svg class="lock"><use href="#i-lock"/></svg></td><td><span class="swatch black"></span></td><td><span class="dot"></span></td><td>Conti...</td></tr>
                            <tr><td>point</td><td><input type="radio" name="layer" aria-label="point"></td><td><svg class="bulb"><use href="#i-bulb"/></svg></td><td><svg class="lock"><use href="#i-lock"/></svg></td><td><span class="swatch red"></span></td><td><span class="dot"></span></td><td>Conti...</td></tr>
                            <tr><td>Lines</td><td><input type="radio" name="layer" aria-label="Lines"></td><td><svg class="bulb"><use href="#i-bulb"/></svg></td><td><svg class="lock"><use href="#i-lock"/></svg></td><td><span class="swatch purple"></span></td><td><span class="dot"></span></td><td>Conti...</td></tr>
                            <tr><td>guildline</td><td><input type="radio" name="layer" aria-label="guildline"></td><td><svg class="bulb"><use href="#i-bulb"/></svg></td><td><svg class="lock"><use href="#i-lock"/></svg></td><td><span class="swatch blue"></span></td><td><span class="dot"></span></td><td>Conti...</td></tr>
                            <tr><td>solid</td><td><input type="radio" name="layer" aria-label="solid"></td><td><svg class="bulb lit"><use href="#i-bulb"/></svg></td><td><svg class="lock"><use href="#i-lock"/></svg></td><td><span class="swatch green"></span></td><td><span class="dot"></span></td><td>Conti...</td></tr>
                            <tr><td>plane</td><td><input type="radio" name="layer" aria-label="plane"></td><td><svg class="bulb"><use href="#i-bulb"/></svg></td><td><svg class="lock"><use href="#i-lock"/></svg></td><td><span class="swatch white"></span></td><td><span class="dot"></span></td><td>Conti...</td></tr>
                        </tbody>
                    </table>
                </div>
                <div class="scroll"><div class="thumb"></div></div>
                <div class="panel-foot">
                    <div class="pair"><button aria-label="Add layer"><svg viewBox="0 0 16 16"><path d="M8 1V15M1 8H15"/></svg></button><button class="minus" aria-label="Delete layer"><svg viewBox="0 0 16 16"><path d="M1 8H15"/></svg></button></div>
                    <button class="gear filled" aria-label="Layer options"><svg class="cog"><use href="#i-gear"/></svg><svg class="chev" viewBox="0 0 10 8"><path d="M1 2 5 6 9 2"/></svg></button>
                </div>
            </section>
        </aside>
    </main>

    <footer class="status">
        <svg class="list" viewBox="0 0 22 16"><path d="M0 2H3M0 8H3M0 14H3M6 2H22M6 8H22M6 14H22"/></svg>
        <span class="message">Successfully read file "/Users/zimingzhu/Documents/SCAD/JEWEL STUDIO/Jewel 725/Emotion 1/Emotion 1.3dm"</span>
        <span class="units">Millimeters</span>
        <span class="picker"><select aria-label="Coordinate system"><option>CPlane</option><option>World</option></select><svg viewBox="0 0 10 18"><path d="M1 6 5 2 9 6M1 12 5 16 9 12"/></svg></span>
        <span class="coord">X: 60.132</span>
        <span class="coord">Y: 13.336</span>
        <span class="coord">Z: 0.000</span>
    </footer>

    <script src="grid.js"></script>
</body>

</html>
```
FILE: styles.css
```css
* {
    box-sizing: border-box;
}

body {
    margin: 0;
    height: 100vh;
    display: flex;
    flex-direction: column;
    overflow: hidden;
    background: #262626;
    color: #e4e4e4;
    font-family: Inter, "Liberation Sans", sans-serif;
    font-size: 18px;
}

button,
input,
select {
    font: inherit;
    color: inherit;
    margin: 0;
    padding: 0;
    border: 0;
    background: none;
}

.defs {
    position: absolute;
}

.line {
    fill: none;
    stroke: #aaa;
    stroke-width: 2;
}

.line.thin {
    stroke-width: 1.5;
}

.faint {
    stroke: #666;
}

/* top bar */
.topbar {
    flex: none;
    height: 70px;
    padding: 10px 20px 0;
    display: flex;
    align-items: center;
    border-bottom: 2px solid #111;
}

.side-toggle {
    width: 32px;
    height: 32px;
    border: 2px solid #ff8a1c;
    border-left-width: 10px;
}

.side-toggle.end {
    border-left-width: 2px;
    border-right-width: 10px;
}

.modes {
    display: flex;
    gap: 16px;
    margin-left: 63px;
}

.mode {
    height: 26px;
    padding: 0 17px;
    border-radius: 6px;
    font-size: 20px;
    font-weight: 600;
    line-height: 24px;
    color: #9b9b9b;
}

.mode.on {
    background: #4b4b4b;
    color: #fff;
}

.top-right {
    margin: 0 545px 0 auto;
    display: flex;
    align-items: center;
}

.top-icon {
    width: 36px;
    height: 36px;
    margin-right: 16px;
}

.top-icon svg {
    width: 36px;
    height: 36px;
    display: block;
}

.top-icon.dim circle {
    stroke: #666;
}

.top-icon:first-child {
    margin-right: 24px;
}

.layer-field {
    width: 314px;
    height: 29px;
    padding-left: 26px;
    border: 1px solid #383838;
    border-radius: 6px;
    text-align: center;
    font-size: 18px;
    color: #a8a8a8;
}

/* toolbar tabs */
.tabs {
    flex: none;
    height: 27px;
    padding-left: 11px;
    display: flex;
    background: #434343;
    border-bottom: 1px solid #787878;
}

.tab {
    height: 26px;
    padding: 0 16px;
    border-right: 1px solid #8d8d8d;
    border-radius: 0 5px 0 6px;
    font-size: 16px;
    font-weight: 600;
    line-height: 20px;
    padding-bottom: 4px;
    color: #fff;
}

.tab.active {
    height: 27px;
    background: #323232;
    border-left: 1px solid #8d8d8d;
    border-radius: 5px 5px 0 0;
    color: #ff8a1c;
}

.toolbar {
    flex: none;
    height: 50px;
    background: #323232;
    border-bottom: 2px solid #0c0c0c;
}

.tools {
    width: 1563px;
    display: grid;
    grid-template-columns: repeat(32, 1fr);
}

.tool {
    position: relative;
    height: 48px;
    display: flex;
    align-items: center;
    justify-content: center;
}

.tool svg {
    width: 48px;
    height: 48px;
    flex: none;
}

.tool.hover {
    background: #4a4a4a;
    border: 1px solid #6a6a6a;
}

.tool.drop::after {
    content: "";
    position: absolute;
    right: 4px;
    bottom: 5px;
    width: 9px;
    height: 9px;
    background: #f0f0f0;
    clip-path: polygon(0 0, 100% 0, 50% 100%);
}

.wheel {
    width: 32px;
    height: 32px;
    border: 2px solid #bbb;
    border-radius: 50%;
    background: radial-gradient(circle, #323232 0 8px, transparent 9px), conic-gradient(red, #ff0, #0d4, #0df, #24f, #e0f, red);
}

/* left column */
.work {
    flex: 1;
    min-height: 0;
    display: flex;
}

.left {
    flex: none;
    width: 224px;
    display: flex;
    flex-direction: column;
    border-right: 2px solid #6d6d6d;
}

.strip {
    height: 42px;
    background: #323232;
    border-bottom: 2px solid #444;
}

.command {
    height: 31px;
    margin: 18px 14px 12px;
    padding: 0 4px;
    background: #323232;
    border: 1px solid #404040;
    border-bottom-color: #666;
    font-size: 21px;
}

.command::placeholder {
    color: #6d6d6d;
    opacity: 1;
}

.palette {
    display: grid;
    grid-template-columns: repeat(4, 49px);
    grid-auto-rows: 49px;
    padding-bottom: 12px;
    border-bottom: 2px solid #7a7a7a;
}

.palette .tool {
    height: 49px;
}

.osnap {
    flex: 1;
    padding-top: 10px;
    font-size: 17px;
}

.osnap label {
    display: flex;
    align-items: center;
    gap: 7px;
    height: 24px;
}

.persist {
    padding-left: 29px;
}

.snaps {
    height: 553px;
    margin: 5px 0 0 32px;
    display: grid;
    grid-auto-rows: 1fr;
    align-items: center;
}

.osnap .disable {
    margin: 34px 0 0 32px;
}

.off {
    color: #5b5b5b;
}

input[type="radio"],
input[type="checkbox"] {
    appearance: none;
    width: 20px;
    height: 20px;
    flex: none;
    border-radius: 4px;
    background: linear-gradient(#464646, #5e5e5e);
    border-top: 1px solid #333;
}

input[type="radio"] {
    border-radius: 50%;
}

input[type="checkbox"]:disabled {
    background: #3b3b3b;
}

input[type="radio"]:checked {
    background: radial-gradient(circle, #fff 0 3px, #e86e08 4px);
}

input[type="checkbox"]:checked {
    background: #e86e08;
    display: flex;
    justify-content: center;
}

input[type="checkbox"]:checked::after {
    content: "";
    width: 7px;
    height: 12px;
    margin-top: 1px;
    border: solid #fff;
    border-width: 0 2px 2px 0;
    transform: rotate(40deg);
}

.scroll {
    height: 24px;
    padding: 6px 5px;
    background: #2e2e2e;
    border-top: 1px solid #444;
}

.thumb {
    width: 152px;
    height: 12px;
    border-radius: 6px;
    background: #6c6c6c;
}

/* viewport */
.center {
    flex: 1;
    min-width: 0;
    display: flex;
    flex-direction: column;
}

.views {
    flex: none;
    height: 42px;
    padding: 0 0 2px 15px;
    display: flex;
    align-items: center;
    background: #323232;
    border-bottom: 2px solid #777;
}

.view-icon {
    width: 26px;
    height: 24px;
    margin-right: 27px;
}

.view-icon svg {
    width: 26px;
    height: 24px;
    display: block;
}

.view-icon.single {
    margin-right: 22px;
}

.view-icon .line {
    stroke: #777;
}

.view-icon.single path {
    stroke: #d4771f;
}

.view {
    height: 22px;
    padding: 0 31px;
    border-left: 2px solid #777;
    font-size: 21px;
    line-height: 20px;
    color: #9b9b9b;
}

.view.active {
    color: #ff8a1c;
}

.stage {
    flex: 1;
    min-height: 0;
    position: relative;
    background: #9da3ac;
}

.scene {
    width: 100%;
    height: 100%;
    display: block;
}

.tag {
    position: absolute;
    left: 1px;
    top: 2px;
    padding: 0 7px;
    background: #005493;
    color: #fff;
    font-size: 20px;
    font-weight: 700;
    line-height: 31px;
}

.scene path {
    fill: none;
}

.scene .minor {
    stroke: #949ba4;
}

.scene .major {
    stroke: #858c95;
}

.scene .axis-x {
    stroke: #b03a40;
    stroke-width: 2;
}

.scene .axis-y {
    stroke: #1e9c38;
    stroke-width: 2;
}

.dims path {
    stroke: #111;
}

.scene .dims .tip {
    fill: #000;
}

.dims text {
    font-family: "Liberation Sans", Arial, sans-serif;
    font-size: 30px;
    fill: #000;
}

.dims .slant {
    font-size: 35px;
    font-style: italic;
}

.dims .small {
    font-size: 22px;
    font-style: italic;
    fill: #222;
}

.metal path,
.metal ellipse {
    fill: url(#metal);
    stroke: #111;
    stroke-width: 4;
    stroke-linejoin: round;
}

.metal .side {
    fill: #b0afac;
}

.metal .dark,
.metal .dark circle {
    fill: #737373;
    stroke: #111;
    stroke-width: 4;
}

.metal .shade {
    fill: #a5a6a8;
}

.metal .gap {
    fill: #9da3ac;
}

.metal .line,
.metal .thin {
    fill: none;
}

.metal .thin {
    stroke-width: 3;
}

.metal .mesh {
    fill: none;
    stroke: #333;
    stroke-dasharray: 3 20;
    stroke-width: 90;
}

.metal .narrow {
    stroke-width: 66;
}

.metal .rim {
    fill: none;
    stroke: #222;
    stroke-width: 28;
}

.metal .ticks {
    fill: none;
    stroke: #aeafb0;
    stroke-width: 14;
    stroke-dasharray: 16 4;
}

.metal .red {
    fill: none;
    stroke: #c8383c;
}

.solid path {
    fill: #128a38;
    stroke: #008200;
    stroke-width: 5;
}

.solid .deep {
    fill: #007a10;
}

.solid .pale {
    fill: #35a052;
}

.solid .shade {
    fill: #007f2c;
}

.solid .shadow {
    fill: #00661c;
}

.solid .edge {
    fill: none;
    stroke-width: 6;
}

.solid .black {
    fill: none;
    stroke: #005a00;
    stroke-width: 8;
}

.solid .mesh {
    fill: none;
    stroke: #008200;
    stroke-width: 90;
    stroke-dasharray: 3 25;
}

.solid .hole {
    fill: #9da3ac;
    stroke: #005a00;
    stroke-width: 5;
}

.gizmo path {
    stroke: #6e747c;
}

.gizmo text {
    font-family: "Liberation Sans", Arial, sans-serif;
    font-size: 22px;
    fill: #5e646b;
}

/* right column */
.right {
    flex: none;
    width: 433px;
    display: flex;
    flex-direction: column;
    border-left: 2px solid #777;
}

.panel {
    display: flex;
    flex-direction: column;
    min-height: 0;
}

.history {
    flex: 808;
    background: #323232;
    border-bottom: 2px solid #777;
}

.layers {
    flex: 561;
    background: #323232;
}

.panel-head {
    display: flex;
    align-items: center;
    height: 39px;
    padding: 0 4px 0 0;
}

.panel-head h2 {
    flex: 1;
    margin: 0;
    padding-left: 19px;
    font-size: 17px;
    font-weight: 400;
    text-align: center;
}

.gear {
    width: 45px;
    height: 26px;
    display: flex;
    align-items: center;
    justify-content: center;
    gap: 4px;
    border: 1px solid #888;
    border-radius: 7px;
}

.cog {
    width: 18px;
    height: 18px;
}

.chev {
    width: 10px;
    height: 8px;
    fill: none;
    stroke: #ddd;
    stroke-width: 2;
}

.panel-tabs {
    display: flex;
    justify-content: center;
    height: 56px;
    padding: 3px 13px 0 0;
    border-bottom: 1px solid #444;
}

.panel-tabs button {
    width: 49px;
    height: 40px;
}

.panel-tabs svg {
    width: 40px;
    height: 40px;
    fill: none;
    stroke: #a8a8a8;
    stroke-width: 2;
}

.panel-tabs .active svg {
    stroke: #ff8a1c;
}

.log {
    flex: 1;
    padding-right: 25px;
    background: #333;
}

.log p {
    height: 100%;
    margin: 0;
    padding: 1px 8px;
    background: #1e1e1e;
    color: #fff;
    font-family: "Liberation Sans", Arial, sans-serif;
    font-size: 20px;
    line-height: 23px;
}

.layer-list {
    flex: 1;
    overflow: hidden;
    background: #1e1e1e;
}

table {
    width: 100%;
    table-layout: fixed;
    border-collapse: collapse;
}

.c-name {
    width: 167px;
}

.c-s {
    width: 37px;
}

.c-m {
    width: 50px;
}

thead tr {
    height: 44px;
    border-bottom: 1px solid #444;
}

th {
    padding: 0;
    text-align: left;
    font-size: 18px;
    font-weight: 500;
    color: #fff;
    white-space: nowrap;
}

th:first-child {
    padding-left: 47px;
}

th + th::before {
    content: "";
    display: inline-block;
    height: 26px;
    margin-right: 8px;
    border-left: 1px solid #555;
    vertical-align: middle;
}

tbody::before {
    content: "";
    display: block;
    height: 8px;
}

td {
    height: 28px;
    padding: 0;
    text-align: center;
    vertical-align: middle;
    line-height: 20px;
    white-space: nowrap;
}

td:first-child {
    padding-left: 43px;
    text-align: left;
}

td:nth-child(6) {
    padding-right: 8px;
}

td:last-child {
    padding-left: 8px;
    text-align: left;
}

th:last-child,
td:last-child {
    font-size: 16px;
}

td input,
td svg,
td span {
    display: block;
    margin: 0 auto;
}

.bulb {
    width: 22px;
    height: 24px;
    color: #eef6fb;
}

.bulb.lit {
    color: #ffb62e;
}

.lock {
    width: 24px;
    height: 24px;
}

.current .bulb,
.current .lock {
    opacity: .45;
}

.swatch {
    width: 23px;
    height: 23px;
}

.black { background: #000; }
.red { background: #ff2a33; }
.purple { background: #9144d6; }
.blue { background: #0030ff; }
.green { background: #009000; }
.white { background: #fff; }

.dot {
    width: 20px;
    height: 20px;
    border-radius: 50%;
    background: #fafafa;
}

.layers .thumb {
    width: 334px;
}

.panel-foot {
    height: 53px;
    padding: 0 29px;
    display: flex;
    align-items: center;
    gap: 26px;
    background: #262626;
    border-top: 1px solid #3c3c3c;
}

.pair {
    display: flex;
    width: 81px;
    height: 26px;
    border: 1px solid #363636;
    border-radius: 5px;
}

.pair button {
    flex: 1;
    display: flex;
    align-items: center;
    justify-content: center;
}

.pair svg {
    width: 16px;
    height: 16px;
    stroke: #aaa;
    stroke-width: 1;
}

.pair .minus {
    border-left: 1px solid #363636;
}

.pair .minus svg {
    stroke: #777;
}

.gear.filled {
    width: 52px;
    gap: 8px;
    border: 0;
    background: #636363;
    color: #222;
}

.filled .chev {
    stroke: #fff;
}

/* status bar */
.status {
    flex: none;
    height: 46px;
    padding-left: 8px;
    display: flex;
    align-items: center;
    background: #323232;
    border-top: 2px solid #0c0c0c;
}

.list {
    width: 22px;
    height: 16px;
    stroke: #888;
    stroke-width: 2;
}

.message {
    padding-left: 4px;
    flex: 1;
}

.picker {
    position: relative;
    width: 113px;
    height: 27px;
    margin: 0 24px 0 27px;
}

.picker select {
    appearance: none;
    width: 100%;
    height: 100%;
    padding-left: 8px;
    border: 1px solid #888;
    border-radius: 6px;
}

.picker svg {
    position: absolute;
    right: 8px;
    top: 4px;
    width: 10px;
    height: 18px;
    fill: none;
    stroke: #999;
    stroke-width: 2;
}

.coord {
    width: 136px;
}

.coord:last-child {
    width: 302px;
}
```
FILE: grid.js
```js
// ground plane to screen projection
function project(u, v) {
    const w = 1 - 0.0097 * u - 0.02184 * v;
    const x = (81.93 * u - 66.54 * v + 1115.4) / w;
    const y = (23.04 * u + 52.26 * v + 713.1) / w;
    return x.toFixed(1) + ' ' + y.toFixed(1);
}

function line(u1, v1, u2, v2) {
    return 'M' + project(u1, v1) + 'L' + project(u2, v2);
}

let minor = '';
let major = '';

for (let i = -150; i <= 130; i++) {
    const lines = line(i / 10, -15, i / 10, 12) + line(-15, i / 10, 13, i / 10);

    if (i % 10 === 0) {
        major += lines;
    } else {
        minor += lines;
    }
}

document.getElementById('minor').setAttribute('d', minor);
document.getElementById('major').setAttribute('d', major);
document.getElementById('axisX').setAttribute('d', line(0, 0, 13, 0));
document.getElementById('axisY').setAttribute('d', line(0, 0, 0, -15));
```
